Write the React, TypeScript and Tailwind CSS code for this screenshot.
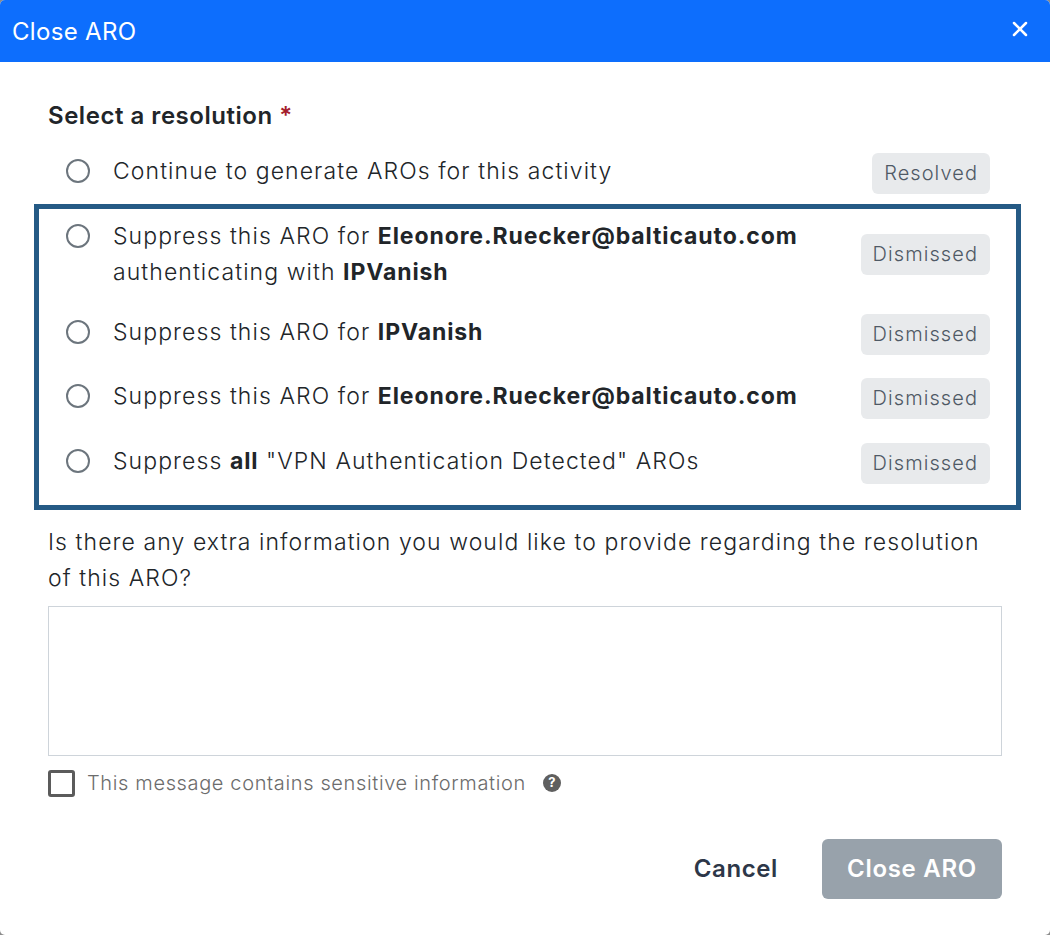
import { X } from "lucide-react";

const Strong = ({ children }: { children: string }) => (
  <b className="font-bold tracking-[0.9px]">{children}</b>
);

const options = [
  {
    id: "one",
    content: (
      <>
        Suppress this ARO for <Strong>Eleonore.Ruecker@balticauto.com</Strong>
        <br />
        authenticating with <Strong>IPVanish</Strong>
      </>
    ),
  },
  {
    id: "two",
    content: (
      <>
        Suppress this ARO for <Strong>IPVanish</Strong>
      </>
    ),
  },
  {
    id: "three",
    content: (
      <>
        Suppress this ARO for <Strong>Eleonore.Ruecker@balticauto.com</Strong>
      </>
    ),
  },
  {
    id: "four",
    content: (
      <>
        Suppress <Strong>all</Strong> "VPN Authentication Detected" AROs
      </>
    ),
  },
];

const Radio = () => (
  <span className="mt-[6px] h-[24px] w-[24px] shrink-0 rounded-full border-2 border-[#6c757d] bg-white" />
);

const Tag = ({ label }: { label: string }) => (
  <span className="rounded-[6px] bg-[#e8eaec] px-[12px] py-[8px] text-[20px] leading-[25px] tracking-[1.07px] text-[#4f5965]">
    {label}
  </span>
);

export default function App() {
  return (
    <div className="h-[935px] w-[1050px] bg-[#8c8c8c]">
      <div className="h-[935px] w-[1050px] overflow-hidden rounded-[5px] bg-white font-['Inter',sans-serif] font-[350] text-[#212529] tracking-[1.08px]">
        <div className="flex h-[62px] items-center justify-between bg-[#0d6efd] pl-[12px] pr-[18px] text-white">
          <span className="mt-[2px] text-[24px] font-normal tracking-[0.33px]">Close ARO</span>
          <X size={24} strokeWidth={2.5} className="-mt-[4px]" />
        </div>

        <div className="px-[48px] pt-[38px]">
          <p className="text-[24px] font-semibold leading-[32px] tracking-[0.53px]">
            Select a resolution <span className="text-[#a51d2d]">*</span>
          </p>

          <div className="mt-[21px] flex items-start justify-between pl-[18px] pr-[12px]">
            <div className="flex items-start gap-[23px]">
              <Radio />
              <span className="text-[23px] leading-[36px]">Continue to generate AROs for this activity</span>
            </div>
            <Tag label="Resolved" />
          </div>

          <div className="-ml-[14px] -mr-[19px] mt-[10px] flex flex-col gap-[23.5px] border-[5px] border-[#255a85] pb-[21px] pl-[27px] pr-[26px] pt-[9px]">
            {options.map((option) => (
              <div key={option.id} className="flex items-center justify-between">
                <div className="flex items-start gap-[23px] self-start">
                  <Radio />
                  <span className="text-[23px] leading-[36px]">{option.content}</span>
                </div>
                <Tag label="Dismissed" />
              </div>
            ))}
          </div>

          <p className="mt-[14px] text-[23px] leading-[36px]">
            Is there any extra information you would like to provide regarding the resolution of this ARO?
          </p>
          <textarea className="mt-[10px] block h-[150px] w-full resize-none border border-[#ced4da] bg-white" />

          <label className="mt-[14px] flex h-[27px] items-center">
            <span className="h-[27px] w-[27px] rounded-[3px] border-[3px] border-[#5b5b5b]" />
            <span className="ml-[12px] text-[20px] leading-[27px] tracking-[0.64px] text-[#6c6c6c]">This message contains sensitive information</span>
            <span className="ml-[17px] flex h-[18px] w-[18px] items-center justify-center rounded-full bg-[#5f5f5f] text-[13px] font-bold tracking-normal text-white">
              ?
            </span>
          </label>

          <div className="mt-[42px] flex items-center justify-end gap-[44px]">
            <span className="text-[24px] font-semibold tracking-[0.6px] text-[#2d3748]">Cancel</span>
            <button className="h-[60px] w-[180px] rounded-[6px] bg-[#98a2ab] text-[24px] font-semibold tracking-[0.7px] text-white">
              Close ARO
            </button>
          </div>
        </div>
      </div>
    </div>
  );
}
